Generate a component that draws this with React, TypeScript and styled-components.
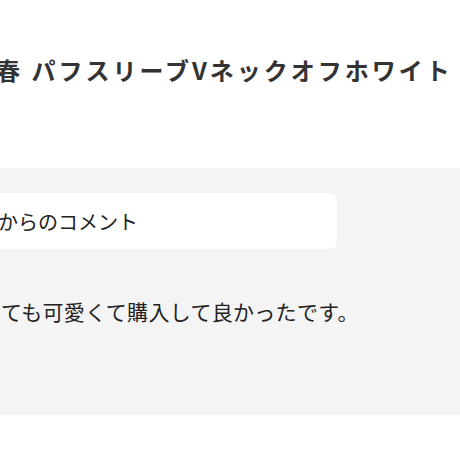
import React from 'react';
import styled, { createGlobalStyle } from 'styled-components';

const GlobalStyle = createGlobalStyle`
  html,
  body {
    margin: 0;
    padding: 0;
    overflow: hidden;
    background: #fff;
    font-family: 'Noto Sans CJK JP', 'Noto Sans', sans-serif;
    color: #222;
  }
`;

// 画面の左側がはみ出した状態で切り取られている
const Page = styled.div`
  margin-left: -24px;
  padding-top: 52px;
`;

const Title = styled.h1`
  margin: 0 0 80px;
  padding-left: 20px;
  font-size: 24px;
  line-height: 36px;
  font-weight: 700;
  letter-spacing: 3px;
  color: #333;
  white-space: nowrap;
`;

const CommentSection = styled.section`
  background: #f4f4f4;
  padding: 25px 0 89px;
`;

const CommentHead = styled.div`
  display: flex;
  align-items: center;
  width: 361px;
  height: 56px;
  padding-left: 22px;
  box-sizing: border-box;
  background: #fff;
  border-radius: 8px;
  font-size: 20px;
  color: #222;
  white-space: nowrap;
`;

const CommentBody = styled.p`
  margin: 47px 0 0;
  padding-left: 25px;
  font-size: 21px;
  line-height: 30px;
  letter-spacing: 0.3px;
  color: #222;
  white-space: nowrap;
`;

const App: React.FC = () => {
  return (
    <>
      <GlobalStyle />
      <Page>
        <Title>春 パフスリーブVネックオフホワイト</Title>
        <CommentSection>
          <CommentHead>からのコメント</CommentHead>
          <CommentBody>ても可愛くて購入して良かったです。</CommentBody>
        </CommentSection>
      </Page>
    </>
  );
};

export default App;
